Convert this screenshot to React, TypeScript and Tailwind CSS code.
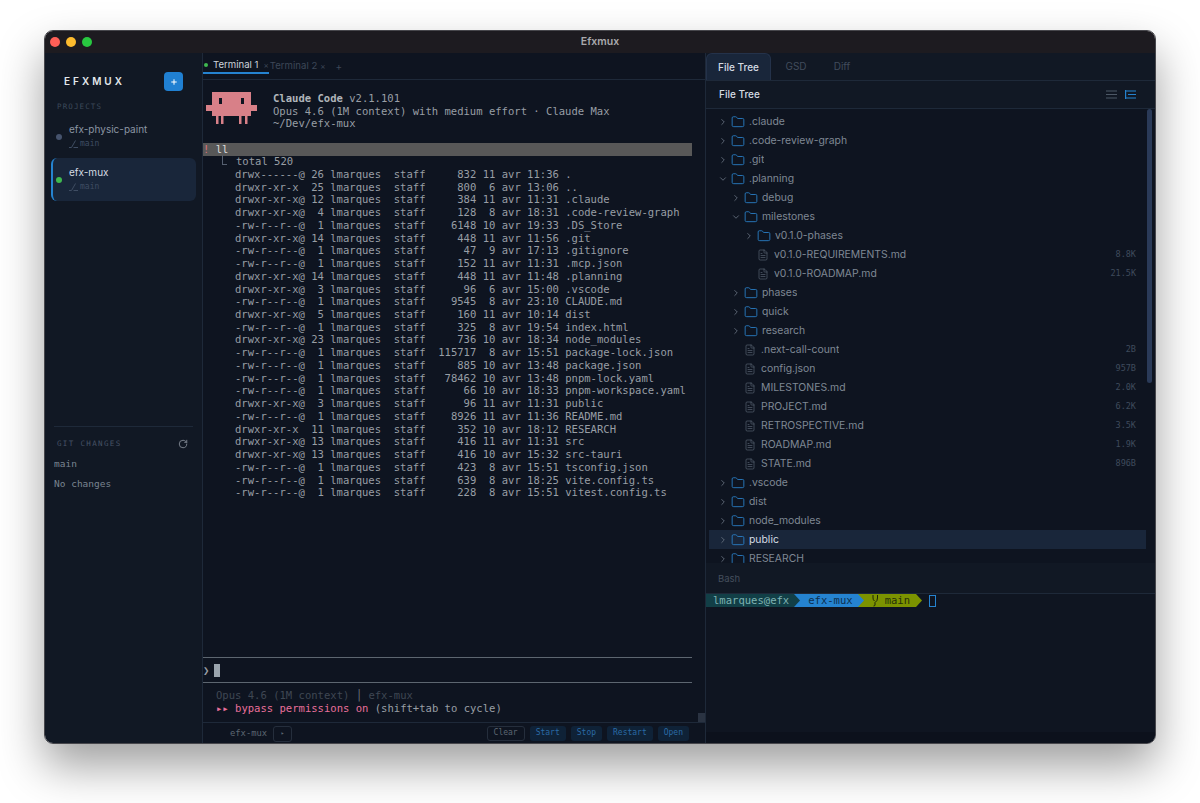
import { ChevronDown, ChevronRight, FileText, Folder, Plus, RotateCw } from "lucide-react";

const mono = "font-['DejaVu_Sans_Mono',monospace]";

const lsRows = [
  "drwx------@ 26 lmarques  staff     832 11 avr 11:36 .",
  "drwxr-xr-x  25 lmarques  staff     800  6 avr 13:06 ..",
  "drwxr-xr-x@ 12 lmarques  staff     384 11 avr 11:31 .claude",
  "drwxr-xr-x@  4 lmarques  staff     128  8 avr 18:31 .code-review-graph",
  "-rw-r--r--@  1 lmarques  staff    6148 10 avr 19:33 .DS_Store",
  "drwxr-xr-x@ 14 lmarques  staff     448 11 avr 11:56 .git",
  "-rw-r--r--@  1 lmarques  staff      47  9 avr 17:13 .gitignore",
  "-rw-r--r--@  1 lmarques  staff     152 11 avr 11:31 .mcp.json",
  "drwxr-xr-x@ 14 lmarques  staff     448 11 avr 11:48 .planning",
  "drwxr-xr-x@  3 lmarques  staff      96  6 avr 15:00 .vscode",
  "-rw-r--r--@  1 lmarques  staff    9545  8 avr 23:10 CLAUDE.md",
  "drwxr-xr-x@  5 lmarques  staff     160 11 avr 10:14 dist",
  "-rw-r--r--@  1 lmarques  staff     325  8 avr 19:54 index.html",
  "drwxr-xr-x@ 23 lmarques  staff     736 10 avr 18:34 node_modules",
  "-rw-r--r--@  1 lmarques  staff  115717  8 avr 15:51 package-lock.json",
  "-rw-r--r--@  1 lmarques  staff     885 10 avr 13:48 package.json",
  "-rw-r--r--@  1 lmarques  staff   78462 10 avr 13:48 pnpm-lock.yaml",
  "-rw-r--r--@  1 lmarques  staff      66 10 avr 18:33 pnpm-workspace.yaml",
  "drwxr-xr-x@  3 lmarques  staff      96 11 avr 11:31 public",
  "-rw-r--r--@  1 lmarques  staff    8926 11 avr 11:36 README.md",
  "drwxr-xr-x  11 lmarques  staff     352 10 avr 18:12 RESEARCH",
  "drwxr-xr-x@ 13 lmarques  staff     416 11 avr 11:31 src",
  "drwxr-xr-x@ 13 lmarques  staff     416 10 avr 15:32 src-tauri",
  "-rw-r--r--@  1 lmarques  staff     423  8 avr 15:51 tsconfig.json",
  "-rw-r--r--@  1 lmarques  staff     639  8 avr 18:25 vite.config.ts",
  "-rw-r--r--@  1 lmarques  staff     228  8 avr 15:51 vitest.config.ts",
];

type TreeItem = { name: string; depth: number; kind: "closed" | "open" | "file"; size?: string; active?: boolean };

const tree: TreeItem[] = [
  { name: ".claude", depth: 0, kind: "closed" },
  { name: ".code-review-graph", depth: 0, kind: "closed" },
  { name: ".git", depth: 0, kind: "closed" },
  { name: ".planning", depth: 0, kind: "open" },
  { name: "debug", depth: 1, kind: "closed" },
  { name: "milestones", depth: 1, kind: "open" },
  { name: "v0.1.0-phases", depth: 2, kind: "closed" },
  { name: "v0.1.0-REQUIREMENTS.md", depth: 2, kind: "file", size: "8.8K" },
  { name: "v0.1.0-ROADMAP.md", depth: 2, kind: "file", size: "21.5K" },
  { name: "phases", depth: 1, kind: "closed" },
  { name: "quick", depth: 1, kind: "closed" },
  { name: "research", depth: 1, kind: "closed" },
  { name: ".next-call-count", depth: 1, kind: "file", size: "2B" },
  { name: "config.json", depth: 1, kind: "file", size: "957B" },
  { name: "MILESTONES.md", depth: 1, kind: "file", size: "2.0K" },
  { name: "PROJECT.md", depth: 1, kind: "file", size: "6.2K" },
  { name: "RETROSPECTIVE.md", depth: 1, kind: "file", size: "3.5K" },
  { name: "ROADMAP.md", depth: 1, kind: "file", size: "1.9K" },
  { name: "STATE.md", depth: 1, kind: "file", size: "896B" },
  { name: ".vscode", depth: 0, kind: "closed" },
  { name: "dist", depth: 0, kind: "closed" },
  { name: "node_modules", depth: 0, kind: "closed" },
  { name: "public", depth: 0, kind: "closed", active: true },
  { name: "RESEARCH", depth: 0, kind: "closed" },
];

function BranchMark() {
  return (
    <svg width="9" height="8" viewBox="0 0 9 8" fill="none" stroke="currentColor" strokeWidth="1" className="shrink-0">
      <path d="M0 7.5h2.5L6.5 0.5" />
      <path d="M4.5 7.5H9" />
    </svg>
  );
}

function ProjectRow({ name, active }: { name: string; active?: boolean }) {
  return (
    <div className={`flex h-[43px] items-center rounded-md border-l-2 pl-[3px] ${active ? "border-[#2583d0] bg-[#19263a]" : "border-transparent"}`}>
      <span className={`h-1.5 w-1.5 rounded-full ${active ? "bg-[#3fb950]" : "bg-[#46536d]"}`} />
      <div className="ml-[7px] pb-[1px]">
        <div className={`text-[10px] leading-[15px] ${active ? "text-[#d5dbe3]" : "text-[#8b95a3]"}`}>{name}</div>
        <div className="mt-[1px] flex items-center gap-[2px] text-[#3f4d63]">
          <BranchMark />
          <span className={`${mono} text-[8px] leading-[12px]`}>main</span>
        </div>
      </div>
    </div>
  );
}

function Sidebar() {
  return (
    <aside className="flex w-[158px] shrink-0 flex-col border-r border-[#1e2939] bg-[#111824]">
      <div className="mt-[14px] flex h-[29px] items-center justify-between pl-[19px] pr-[19px]">
        <span className="text-[10px] font-semibold tracking-[0.3em] text-[#e3e7ec]">EFXMUX</span>
        <button className="flex h-[19px] w-[19px] items-center justify-center rounded bg-[#2080d2] text-white">
          <Plus size={8} strokeWidth={3} />
        </button>
      </div>
      <div className={`${mono} mt-[5px] pl-[12px] text-[7.5px] tracking-[0.15em] text-[#3c4859]`}>PROJECTS</div>
      <div className="mt-[3px] flex flex-col px-[6px]">
        <ProjectRow name="efx-physic-paint" />
        <ProjectRow name="efx-mux" active />
      </div>
      <div className="mx-[9px] mt-[225px] border-t border-[#1e2939]" />
      <div className="flex items-center justify-between pl-[12px] pr-[14px] pt-[11px]">
        <span className={`${mono} text-[7.5px] tracking-[0.18em] text-[#465264]`}>GIT CHANGES</span>
        <RotateCw size={10} className="text-[#8a929c]" />
      </div>
      <div className={`${mono} mt-[8px] pl-[9px] text-[9.5px] leading-[12px] text-[#7a8490]`}>main</div>
      <div className={`${mono} mt-[8px] pl-[9px] text-[9.5px] leading-[12px] text-[#7a8490]`}>No changes</div>
    </aside>
  );
}

function ClaudeMascot() {
  return (
    <svg width="51" height="32" viewBox="0 0 51 32" fill="#d88088" className="shrink-0">
      <rect x="6" y="0" width="39" height="24" />
      <rect x="0" y="13" width="51" height="6" />
      <rect x="10" y="24" width="2.5" height="8" />
      <rect x="15" y="24" width="2.5" height="8" />
      <rect x="33" y="24" width="2.5" height="8" />
      <rect x="39" y="24" width="2.5" height="8" />
      <rect x="13" y="6" width="3" height="6" fill="#0e1420" />
      <rect x="35" y="6" width="3" height="6" fill="#0e1420" />
    </svg>
  );
}

function ToolButton({ label }: { label: string }) {
  return <span className="flex h-[15px] items-center rounded-[3px] bg-[#0f2237] px-[6px] text-[#2a6aa5]">{label}</span>;
}

function TerminalPane() {
  return (
    <main className={`${mono} flex w-[503px] shrink-0 flex-col border-r border-[#1e2939] bg-[#0e1420] text-[10.55px] leading-[12.73px] text-[#989ea5]`}>
      <div className="flex h-[27px] items-end border-b border-[#1e2939] pb-[5px] font-['Inter',sans-serif] text-[9.6px]">
        <div className="flex h-[16px] items-center border-b-2 border-[#2583d0]">
          <span className="ml-[1px] h-[4px] w-[4px] rounded-full bg-[#3fb950]" />
          <span className="ml-[5px] text-[#cfd5dc]">Terminal 1</span>
          <span className="ml-[5px] text-[8px] text-[#3d4757]">×</span>
        </div>
        <div className="flex h-[16px] items-center text-[#3d4757]">
          <span className="ml-[1px]">Terminal 2</span>
          <span className="ml-[3px] text-[8px]">×</span>
          <span className="ml-[10px] text-[10px]">+</span>
        </div>
      </div>
      <div className="flex items-start pl-[3px] pt-[12px]">
        <ClaudeMascot />
        <div className="ml-[16px]">
          <div><b className="font-bold text-[#b0b5ba]">Claude Code</b> v2.1.101</div>
          <div>Opus 4.6 (1M context) with medium effort · Claude Max</div>
          <div>~/Dev/efx-mux</div>
        </div>
      </div>
      <div className="mt-[13px] flex h-[13px] w-[489px] items-center whitespace-pre bg-[#585858] text-[#dddddd]">
        <span className="text-[#d8737c]">!</span> ll
      </div>
      <div className="-mt-[1px] whitespace-pre">
        <div className="flex items-start pl-[19px]">
          <span className="mr-[9px] h-[10px] w-[5px] shrink-0 border-b border-l border-[#566070]" />
          <span>total 520</span>
        </div>
        {lsRows.map((row, i) => (
          <div key={i} className="pl-[32px]">{row}</div>
        ))}
      </div>
      <div className="flex-1" />
      <div className="flex h-[26px] w-[489px] items-center gap-[5px] border-t border-b border-[#5d6670]">
        <span>❯</span>
        <span className="h-[13px] w-[6px] bg-[#9aa4ad]" />
      </div>
      <div className="relative h-[39px] pl-[13px] pt-[6px]">
        <div className="text-[#3f4753]">Opus 4.6 (1M context) <span className="text-[#70777f]">│</span> efx-mux</div>
        <div><span className="text-[#e86f9a]">▸▸ bypass permissions on</span> (shift+tab to cycle)</div>
        <span className="absolute right-0 bottom-0 h-[9px] w-[7px] bg-[#2a3342]" />
      </div>
      <div className="flex h-[21px] items-center border-t border-[#1e2939] pl-[27px] pr-[16px] pt-[1px] text-[8px] text-[#5d6672]">
        <span className="text-[8.8px]">efx-mux</span>
        <span className="ml-[6px] flex h-[16px] w-[19px] items-center justify-center rounded-[3px] border border-[#252e3c] text-[6px]">▸</span>
        <div className="ml-auto flex items-center gap-[5px]">
          <span className="flex h-[15px] items-center rounded-[3px] border border-[#252e3c] px-[6px]">Clear</span>
          <ToolButton label="Start" />
          <ToolButton label="Stop" />
          <ToolButton label="Restart" />
          <ToolButton label="Open" />
        </div>
      </div>
    </main>
  );
}

function TreeRow({ item }: { item: TreeItem }) {
  const indent = item.depth * 13;
  return (
    <div
      className={`flex h-[19px] shrink-0 items-center pr-[10px] text-[10.4px] ${item.active ? "bg-[#19263a] text-[#d5dbe3]" : "text-[#7f8894]"}`}
      style={{ paddingLeft: 9 + indent }}
    >
      {item.kind === "closed" && <ChevronRight size={10} className="shrink-0 text-[#697382]" />}
      {item.kind === "open" && <ChevronDown size={10} className="shrink-0 text-[#697382]" />}
      {item.kind === "file" ? (
        <FileText size={12} strokeWidth={1.25} className="ml-[13px] shrink-0 text-[#5f6a78]" />
      ) : (
        <Folder size={14} strokeWidth={1.5} className="ml-[3px] shrink-0 text-[#2a80c8]" />
      )}
      <span className={`truncate ${item.kind === "file" ? "ml-[5px]" : "ml-[4px]"}`}>{item.name}</span>
      {item.size && <span className={`${mono} ml-auto text-[8.5px] text-[#3f4b5c]`}>{item.size}</span>}
    </div>
  );
}

function RightPane() {
  return (
    <section className="flex min-w-0 flex-1 flex-col bg-[#0f1521]">
      <div className="flex h-[28px] shrink-0 items-end border-b border-[#1e2939] bg-[#111824] text-[10px]">
        <div className="flex h-[27px] w-[65px] items-center justify-center rounded-t-md border border-b-0 border-[#24324a] bg-[#19263a] font-medium text-[#d5dbe3]">File Tree</div>
        <div className="flex h-[27px] w-[50px] items-center justify-center text-[#414c5c]">GSD</div>
        <div className="flex h-[27px] w-[42px] items-center justify-center text-[#414c5c]">Diff</div>
      </div>
      <div className="flex h-[28px] shrink-0 items-center justify-between border-b border-[#1e2939] bg-[#111824] pl-[13px] pr-[19px]">
        <span className="text-[10px] font-medium text-[#d5dbe3]">File Tree</span>
        <div className="flex items-center gap-[8px]">
          <svg width="11" height="9" viewBox="0 0 11 9" stroke="#4d5866" strokeWidth="1.2">
            <path d="M0 1h11M0 4.500h11M0 8h11" />
          </svg>
          <svg width="11" height="9" viewBox="0 0 11 9" stroke="#2583d0" strokeWidth="1.2" fill="none">
            <path d="M0.600 0v9M0.600 1H11M3 4.500h8M0.600 8H11" />
          </svg>
        </div>
      </div>
      <div className="relative flex h-[454px] shrink-0 flex-col overflow-hidden bg-[#0e1420] pl-[3px] pr-[9px] pt-[3px]">
        {tree.map((item) => (
          <TreeRow key={item.name} item={item} />
        ))}
        <span className="absolute right-[3px] top-0 h-[274px] w-[5px] rounded-full bg-[#2a3a58]" />
      </div>
      <div className="flex h-[31px] shrink-0 items-end border-b border-[#1e2939] bg-[#111824] pb-[8px] pl-[12px] text-[9.5px] leading-[12px] text-[#444e5c]">Bash</div>
      <div className={`${mono} flex h-[13px] shrink-0 items-center text-[10.55px] leading-[13px]`}>
        <span className="whitespace-pre bg-[#123f47] pl-[7px] pr-[5px] text-[#7fb3b3]">lmarques@efx</span>
        <Arrow from="#123f47" to="#2583d0" />
        <span className="whitespace-pre bg-[#2583d0] pl-[8px] pr-[5px] text-[#0e2f4e]">efx-mux</span>
        <Arrow from="#2583d0" to="#7c9300" />
        <span className="flex h-[13px] items-center whitespace-pre bg-[#7c9300] pl-[8px] pr-[6px] text-[#26300a]">
          <svg width="6" height="13" viewBox="0 0 6 13" fill="none" stroke="#1c2408" strokeWidth="1" className="shrink-0">
            <path d="M1 1v3q0 2 1.500 3M5.500 1v3q0 3-2.500 4.500v2.500q0 1-1.500 1" />
          </svg>
          <span className="ml-[7px]">main</span>
        </span>
        <Arrow from="#7c9300" to="transparent" />
        <span className="ml-[7px] h-[12px] w-[7px] border border-[#2583d0]" />
      </div>
      <div className="flex-1" />
      <div className="h-[11px] shrink-0 bg-[#0c111c]" />
    </section>
  );
}

function Arrow({ from, to }: { from: string; to: string }) {
  return (
    <svg width="6" height="13" viewBox="0 0 6 13" className="shrink-0" style={{ background: to }}>
      <path d="M0 0l6 6.500-6 6.500z" fill={from} />
    </svg>
  );
}

export default function App() {
  return (
    <div className="flex h-[803px] w-[1200px] items-start justify-center bg-white pt-[30px] font-['Inter',sans-serif]">
      <div className="flex h-[714px] w-[1112px] flex-col overflow-hidden rounded-[9px] border border-[#47474c] shadow-[0_22px_45px_rgba(0,0,0,0.38)]">
        <div className="relative flex h-[22px] shrink-0 items-center justify-center bg-[#1d1b20]">
          <div className="absolute left-[5px] flex gap-[6px]">
            <span className="h-[10px] w-[10px] rounded-full bg-[#ff5f57]" />
            <span className="h-[10px] w-[10px] rounded-full bg-[#febc2e]" />
            <span className="h-[10px] w-[10px] rounded-full bg-[#28c840]" />
          </div>
          <span className="pb-[1px] text-[10.5px] font-semibold text-[#a9a9ad]">Efxmux</span>
        </div>
        <div className="flex min-h-0 flex-1">
          <Sidebar />
          <TerminalPane />
          <RightPane />
        </div>
      </div>
    </div>
  );
}
